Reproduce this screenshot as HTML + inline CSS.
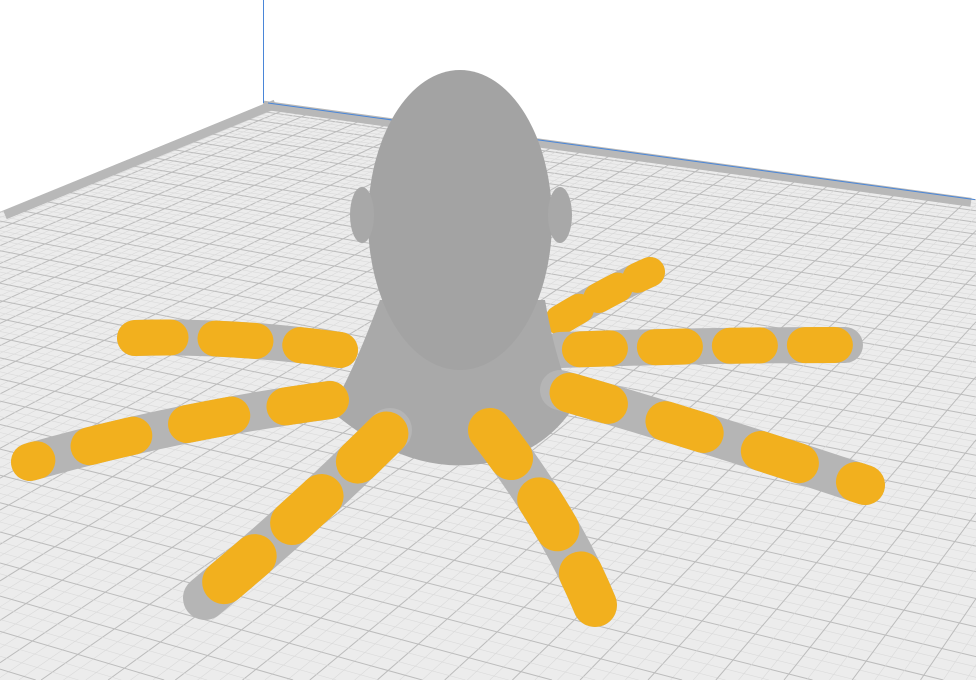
<!DOCTYPE html>
<html><head><meta charset="utf-8"><style>
html,body{margin:0;padding:0;background:#fff;width:976px;height:680px;overflow:hidden}
#wrap{position:relative;width:976px;height:680px;overflow:hidden}
svg{display:block;overflow:hidden;position:absolute;left:0;top:0}
</style></head><body>
<div id="wrap">
<svg id="s" width="976" height="680" viewBox="0 0 976 680" xmlns="http://www.w3.org/2000/svg">
<g id="plate"></g>
<line x1="263.5" y1="0" x2="263.5" y2="103" stroke="#4a86d8" stroke-width="1"/>
<g id="oct">
  <g fill="none" stroke-linecap="round">
    <path d="M560 320 Q610 290 650 272" stroke="#b5b5b5" stroke-width="30"/>
    <path d="M560 320 Q610 290 650 272" stroke="#f2b01e" stroke-width="30" stroke-dasharray="22 22"/>
    <path d="M560 350 Q700 345 845 345" stroke="#b5b5b5" stroke-width="36"/>
    <path d="M560 350 Q700 345 845 345" stroke="#f2b01e" stroke-width="36" stroke-dasharray="30 45" stroke-dashoffset="-20"/>
    <path d="M340 350 Q230 335 135 338" stroke="#b5b5b5" stroke-width="36"/>
    <path d="M340 350 Q230 335 135 338" stroke="#f2b01e" stroke-width="36" stroke-dasharray="40 45"/>
  </g>
  <path d="M380 300 Q350 380 330 410 Q400 470 470 465 Q540 460 575 405 Q555 360 545 300 Z" fill="#a9a9a9"/>
  <ellipse cx="460" cy="220" rx="92" ry="150" fill="#a3a3a3"/>
  <ellipse cx="362" cy="215" rx="12" ry="28" fill="#a8a8a8"/>
  <ellipse cx="560" cy="215" rx="12" ry="28" fill="#a8a8a8"/>
  <g fill="none" stroke-linecap="round">
    <path d="M560 390 Q700 430 865 485" stroke="#b5b5b5" stroke-width="40"/>
    <path d="M560 390 Q700 430 865 485" stroke="#f2b01e" stroke-width="40" stroke-dasharray="40 60" stroke-dashoffset="-10"/>
    <path d="M330 400 Q180 420 30 462" stroke="#b5b5b5" stroke-width="38"/>
    <path d="M330 400 Q180 420 30 462" stroke="#f2b01e" stroke-width="38" stroke-dasharray="45 55"/>
    <path d="M390 430 Q300 520 205 598" stroke="#b5b5b5" stroke-width="44"/>
    <path d="M390 430 Q300 520 205 598" stroke="#f2b01e" stroke-width="44" stroke-dasharray="40 50" stroke-dashoffset="-5"/>
    <path d="M490 430 Q560 520 595 605" stroke="#b5b5b5" stroke-width="44"/>
    <path d="M490 430 Q560 520 595 605" stroke="#f2b01e" stroke-width="44" stroke-dasharray="35 50"/>
  </g>
</g>
</svg>
</div>
<script>
(function(){
var W=976,Hh=680;
function homog(src,dst){
 var A=[],b=[];
 for(var i=0;i<4;i++){var x=src[i][0],y=src[i][1],u=dst[i][0],v=dst[i][1];
  A.push([x,y,1,0,0,0,-u*x,-u*y]);b.push(u);
  A.push([0,0,0,x,y,1,-v*x,-v*y]);b.push(v);}
 var n=8;for(var c=0;c<n;c++){var p=c;for(var r=c+1;r<n;r++)if(Math.abs(A[r][c])>Math.abs(A[p][c]))p=r;
  var t=A[c];A[c]=A[p];A[p]=t;t=b[c];b[c]=b[p];b[p]=t;
  for(var r=0;r<n;r++)if(r!=c){var f=A[r][c]/A[c][c];for(var k=c;k<n;k++)A[r][k]-=f*A[c][k];b[r]-=f*b[c];}}
 var h=[];for(var i=0;i<n;i++)h.push(b[i]/A[i][i]);h.push(1);return h;}
var N=40;
var H=homog([[0,0],[N,0],[N,N],[0,N]],[[268,103],[1600,285],[1400,1600],[-1000,620]]);
function P(x,y){var w=H[6]*x+H[7]*y+1;return[(H[0]*x+H[1]*y+H[2])/w,(H[3]*x+H[4]*y+H[5])/w];}
function clipLine(p1,p2,m){
 var x0=p1[0],y0=p1[1],dx=p2[0]-x0,dy=p2[1]-y0,t0=0,t1=1;
 var P_=[-dx,dx,-dy,dy],Q=[x0-m,W-m-x0,y0-m,Hh-m-y0];
 for(var i=0;i<4;i++){if(P_[i]==0){if(Q[i]<0)return null;}else{var r=Q[i]/P_[i];if(P_[i]<0){if(r>t1)return null;if(r>t0)t0=r;}else{if(r<t0)return null;if(r<t1)t1=r;}}}
 return [[x0+t0*dx,y0+t0*dy],[x0+t1*dx,y0+t1*dy]];}
function L(p1,p2,col,sw,m){var c=clipLine(p1,p2,m||0);if(!c)return '';
 return '<line x1="'+c[0][0].toFixed(1)+'" y1="'+c[0][1].toFixed(1)+'" x2="'+c[1][0].toFixed(1)+'" y2="'+c[1][1].toFixed(1)+'" stroke="'+col+'" stroke-width="'+sw+'"/>';}
function clipPoly(pts){
 var edges=[function(p){return p[0]>=0},function(p){return p[0]<=W},function(p){return p[1]>=0},function(p){return p[1]<=Hh}];
 var inter=[function(a,b){var t=(0-a[0])/(b[0]-a[0]);return[0,a[1]+t*(b[1]-a[1])]},
  function(a,b){var t=(W-a[0])/(b[0]-a[0]);return[W,a[1]+t*(b[1]-a[1])]},
  function(a,b){var t=(0-a[1])/(b[1]-a[1]);return[a[0]+t*(b[0]-a[0]),0]},
  function(a,b){var t=(Hh-a[1])/(b[1]-a[1]);return[a[0]+t*(b[0]-a[0]),Hh]}];
 for(var e=0;e<4;e++){var out=[];for(var i=0;i<pts.length;i++){var cur=pts[i],prev=pts[(i+pts.length-1)%pts.length];
  var ci=edges[e](cur),pi=edges[e](prev);
  if(ci){if(!pi)out.push(inter[e](prev,cur));out.push(cur);}else if(pi)out.push(inter[e](prev,cur));}
  pts=out;}
 return pts;}
var g=document.getElementById('plate'),s='';
var a=P(0,0),b=P(N,0),c=P(N,N),d=P(0,N);
var poly=clipPoly([a,b,c,d]);
s+='<polygon points="'+poly.map(function(p){return p[0].toFixed(1)+','+p[1].toFixed(1)}).join(' ')+'" fill="#ececec"/>';
for(var i=0;i<=N*3;i++){var t=i/3;var col=(i%3==0)?'#bcbcbc':'#dadada';var sw=(i%3==0)?1:0.6;
 s+=L(P(t,0),P(t,N),col,sw);
 s+=L(P(0,t),P(N,t),col,sw);}
s+=L(P(0,0.3),P(N,0.3),'#b8b8b8',9,5);
s+=L(P(0.3,0),P(0.3,N),'#b8b8b8',9,5);
s+=L(a,b,'#4a86d8',1,1);
g.innerHTML=s;
})();
</script>
</body></html>
